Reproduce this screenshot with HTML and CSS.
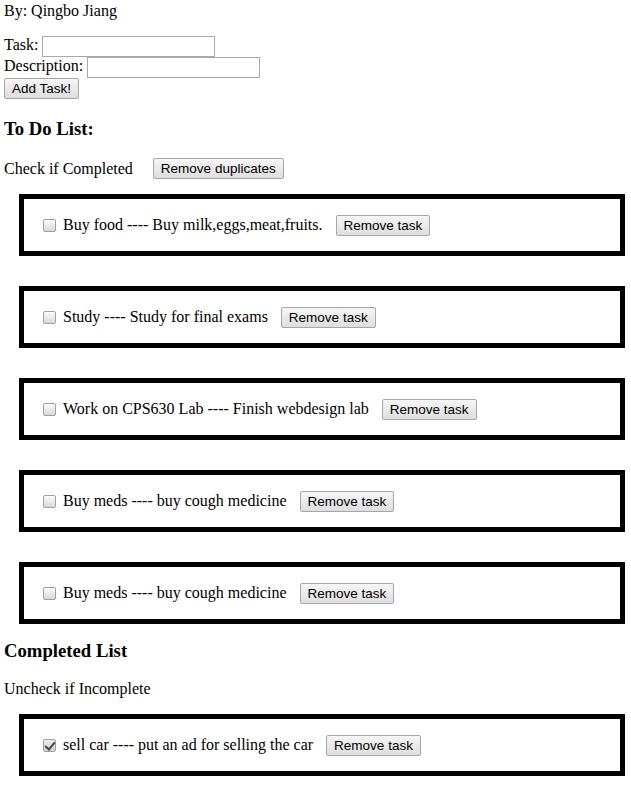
FILE: index.html
```html
<!DOCTYPE html>
<html>
<head>
<meta charset="utf-8">
<title>To Do List</title>
<link rel="stylesheet" href="styles.css">
</head>
<body>
<p class="byline">By: Qingbo Jiang</p>
<form class="add-form">
  <div class="field">Task: <input type="text" class="text-input"></div>
  <div class="field">Description: <input type="text" class="text-input"></div>
  <div class="field"><button type="button" class="btn">Add Task!</button></div>
</form>

<h3 class="heading">To Do List:</h3>
<p class="hint">Check if Completed<button type="button" class="btn btn-dup">Remove duplicates</button></p>

<div class="list">
  <div class="task"><p class="task-line"><input type="checkbox" class="check"> Buy food ---- Buy milk,eggs,meat,fruits.<button type="button" class="btn btn-remove">Remove task</button></p></div>
  <div class="task"><p class="task-line"><input type="checkbox" class="check"> Study ---- Study for final exams<button type="button" class="btn btn-remove">Remove task</button></p></div>
  <div class="task"><p class="task-line"><input type="checkbox" class="check"> Work on CPS630 Lab ---- Finish webdesign lab<button type="button" class="btn btn-remove">Remove task</button></p></div>
  <div class="task"><p class="task-line"><input type="checkbox" class="check"> Buy meds ---- buy cough medicine<button type="button" class="btn btn-remove">Remove task</button></p></div>
  <div class="task"><p class="task-line"><input type="checkbox" class="check"> Buy meds ---- buy cough medicine<button type="button" class="btn btn-remove">Remove task</button></p></div>
</div>

<h3 class="heading heading-done">Completed List</h3>
<p class="hint hint-done">Uncheck if Incomplete</p>

<div class="list">
  <div class="task"><p class="task-line"><input type="checkbox" class="check" checked> sell car ---- put an ad for selling the car<button type="button" class="btn btn-remove">Remove task</button></p></div>
</div>
</body>
</html>
```

FILE: styles.css
```css
html, body {
  background: #fff;
}
body {
  margin: 0;
  padding: 2px 4px 20px 4px;
  font-family: "Liberation Serif", "Times New Roman", serif;
  font-size: 16px;
  color: #000;
}
.byline {
  margin: 0 0 16px;
}
.add-form {
  margin: 0;
}
.field {
  height: 21px;
}
.text-input {
  box-sizing: border-box;
  width: 173px;
  height: 21px;
  margin: 0;
  padding: 1px 2px;
  border: 1px solid #a9a9a9;
  font-family: "Liberation Sans", Arial, sans-serif;
  font-size: 13.33px;
  vertical-align: -1px;
}
.btn {
  box-sizing: border-box;
  height: 21px;
  margin: 0;
  padding: 1px 7px;
  border: 1px solid #a6a6a6;
  border-radius: 2px;
  background: linear-gradient(#f6f6f6, #dedede);
  font-family: "Liberation Sans", Arial, sans-serif;
  font-size: 13.5px;
  color: #000;
  line-height: 17px;
}
.heading {
  font-size: 18.72px;
  font-weight: bold;
  margin: 19px 0 18px;
}
.heading-done {
  margin-top: 16px;
}
.hint {
  margin: 0 0 15px;
}
.hint-done {
  margin-bottom: 16px;
}
.btn-dup {
  margin-left: 20px;
  vertical-align: 1px;
}
.list {
  margin: 0;
}
.task {
  border: 5px solid #000;
  margin: 0 2px 30px 15px;
  padding: 0 14px;
}
.task:last-child {
  margin-bottom: 0;
}
.task-line {
  margin: 0;
  height: 52px;
  display: flex;
  align-items: center;
}
.check {
  -webkit-appearance: none;
  appearance: none;
  position: relative;
  box-sizing: border-box;
  width: 13px;
  height: 13px;
  margin: 0 7px 0 5px;
  border: 1px solid #a0a0a0;
  border-radius: 2px;
  background: linear-gradient(#fcfcfc, #d8d8d8);
  flex: none;
}
.check:checked {
  background: linear-gradient(#eeeeee, #d0d0d0);
}
.check:checked::after {
  content: "";
  position: absolute;
  left: 3px;
  top: 0px;
  width: 4px;
  height: 8px;
  border: solid #4a4a4a;
  border-width: 0 2px 2px 0;
  transform: rotate(40deg);
}
.btn-remove {
  margin-left: 13px;
  flex: none;
}
```
